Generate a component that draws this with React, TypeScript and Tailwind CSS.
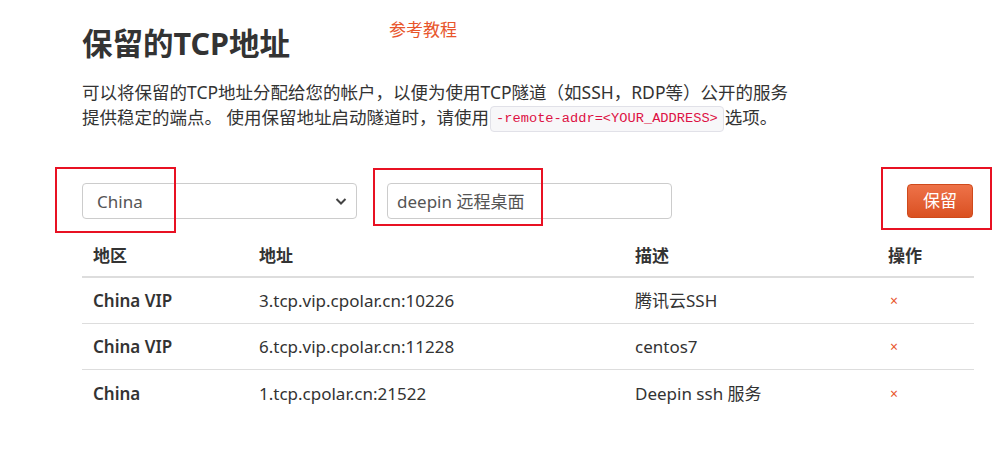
import React from "react";

const FONT = "font-['Noto_Sans','Noto_Sans_CJK_SC',sans-serif]";

const rows = [
  { region: "China VIP", addr: "3.tcp.vip.cpolar.cn:10226", desc: "腾讯云SSH" },
  { region: "China VIP", addr: "6.tcp.vip.cpolar.cn:11228", desc: "centos7" },
  { region: "China", addr: "1.tcp.cpolar.cn:21522", desc: "Deepin ssh 服务" },
];

export default function App() {
  return (
    <div className={`relative w-[1008px] h-[451px] bg-white text-[#333] ${FONT}`}>
      <div className="pl-[82px] pt-[25px]">
        <div className="flex items-start">
          <h1 className="text-[30.5px] leading-[36px] font-bold text-[#333]">保留的TCP地址</h1>
          <a className="ml-[99px] -mt-[8px] text-[17px] leading-[25px] text-[#e8552b]">参考教程</a>
        </div>
        <p className="mt-[19px] w-[760px] text-[17.5px] leading-[25px] text-[#333]">
          可以将保留的TCP地址分配给您的帐户，以便为使用TCP隧道（如SSH，RDP等）公开的服务
          <br />
          提供稳定的端点。 使用保留地址启动隧道时，请使用
          <code className="inline-block mx-[1px] px-[5px] h-[26px] leading-[24px] align-middle rounded-[4px] border border-[#e1e1e8] bg-[#f7f7f9] text-[#dd1144] text-[13.7px] font-['Liberation_Mono',monospace]">
            -remote-addr=&lt;YOUR_ADDRESS&gt;
          </code>
          选项。
        </p>

        <div className="mt-[51px] flex items-center w-[892px]">
          <div className="relative w-[275px] h-[36px] rounded-[4px] border border-[#ccc] flex items-center pl-[14px]">
            <span className="text-[17px] text-[#555]">China</span>
            <svg className="absolute right-[9px] top-[13px]" width="12" height="9" viewBox="0 0 12 9">
              <path d="M1.5 2 L6 6.5 L10.5 2" stroke="#444" strokeWidth="2" fill="none" />
            </svg>
          </div>
          <div className="ml-[30px] w-[285px] h-[36px] rounded-[4px] border border-[#ccc] flex items-center pl-[9px]">
            <span className="text-[17px] text-[#555]">deepin 远程桌面</span>
          </div>
          <button className="ml-auto mr-[1px] w-[66px] h-[34px] rounded-[4px] border border-[#cf4a1c] bg-gradient-to-b from-[#ee7248] to-[#da5020] text-white text-[17px] leading-[32px]">
            保留
          </button>
        </div>

        <div className="mt-[15px] w-[892px]">
          <div className="grid grid-cols-[166px_376px_253px_97px] h-[44px] items-center border-b-2 border-[#ddd] px-[11px] font-bold text-[17px]">
            <div>地区</div>
            <div>地址</div>
            <div>描述</div>
            <div>操作</div>
          </div>
          {rows.map((r, i) => (
            <div
              key={i}
              className={`grid grid-cols-[166px_376px_253px_97px] h-[46px] items-center px-[11px] text-[17px] ${
                i < rows.length - 1 ? "border-b border-[#ddd]" : ""
              }`}
            >
              <div className="font-semibold">{r.region}</div>
              <div>{r.addr}</div>
              <div>{r.desc}</div>
              <div className="pl-[2px] text-[14px] text-[#e8552b]">×</div>
            </div>
          ))}
        </div>
      </div>

      <div className="absolute left-[55px] top-[167px] w-[121px] h-[66px] border-2 border-[#e81123]" />
      <div className="absolute left-[373px] top-[168px] w-[170px] h-[58px] border-2 border-[#e81123]" />
      <div className="absolute left-[881px] top-[167px] w-[111px] h-[63px] border-2 border-[#e81123]" />
    </div>
  );
}
